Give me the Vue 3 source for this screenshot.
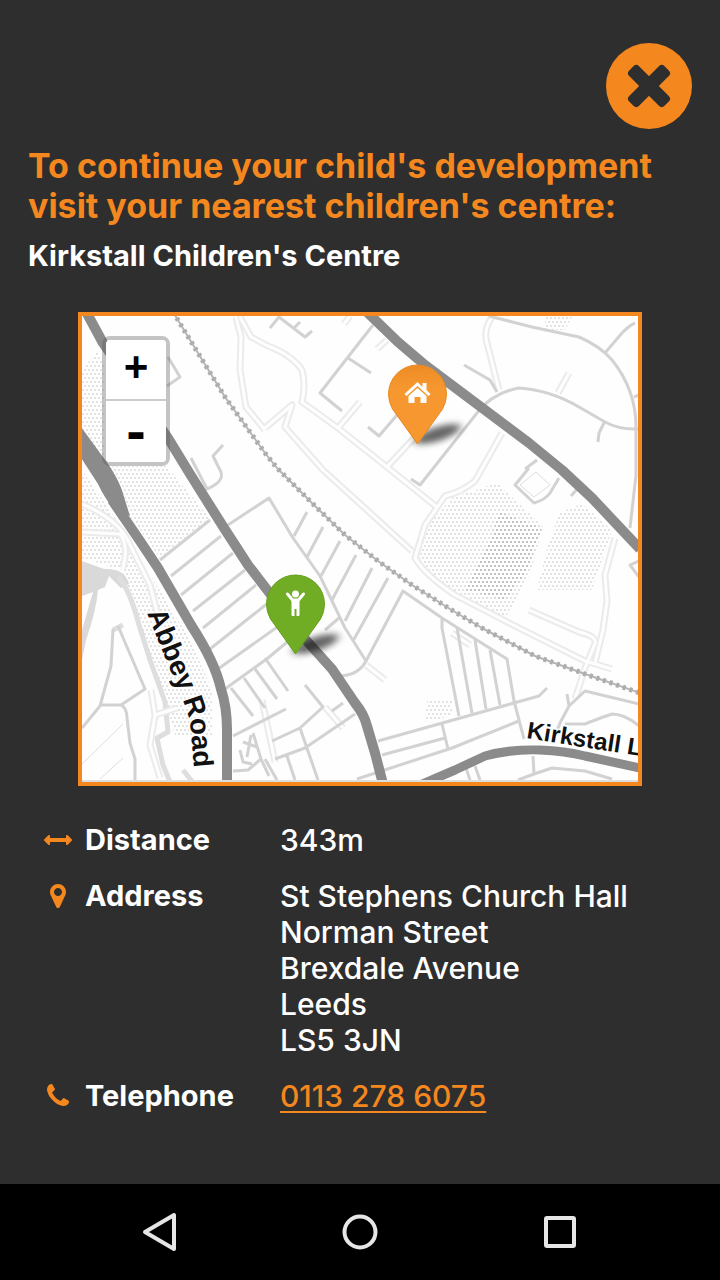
<script setup>
const title = "To continue your child's development visit your nearest children's centre:"
const centre = "Kirkstall Children's Centre"
const address = ['St Stephens Church Hall', 'Norman Street', 'Brexdale Avenue', 'Leeds', 'LS5 3JN']

const lanes = [
  'M236 317L241 337 240 370 246 407 265 430',
  'M240 317L251 337 268 346Q292 355 302 370Q306 385 302 402L338 428 387 467 438 508',
  'M265 428L292 405 285 427 323 470 412 551',
  'M360 402L338 428M387 467L415 437M350 316L344 324M387 340L377 349',
  'M492 317Q483 330 487 343L499 390M569 373L558 393',
  'M502 433L475 481Q462 492 445 496L425 525 415 558Q425 575 455 595L519 628 585 661 612 669',
  'M615 538L605 575 607 601 603 630 595 663M529 610L579 632Q600 637 594 646L585 668 575 699',
  'M82 504Q120 520 130 545L150 585 157 612M82 532L120 534Q129 545 123 568',
  'M452 633L470 645M325 707L343 728M366 665L385 680M262 700L275 762',
  'M151 690L155 715 150 745 160 778M155 715L177 708'
]
const streets = [
  'M168 357L180 377 167 386M223 445L213 456 221 472Q224 482 207 489L191 458',
  'M270 328L279 317 305 337 312 331M293 329L300 322',
  'M373 325L320 393 342 411M348 358L371 373M368 427L379 436 397 415',
  'M411 479L420 485 477 413Q492 393 519 388Q550 390 579 407L605 422Q620 430 638 429M604 423L599 433 598 442',
  'M464 365L490 380 497 392M537 460L525 469',
  'M489 316L532 327 579 337Q600 346 612 360Q636 390 636 427L636 475 630 528M605 353L622 333Q630 325 635 323M634 397L639 395',
  'M529 468L515 485 534 503Q545 500 550 493L559 478M571 496L578 488M639 561L630 565 639 577',
  'M160 560L210 520M171 576L221 536M181 595L233 553M193 611L245 570M203 628L256 585M210 649L268 603M218 669L290 618M225 689L268 658 292 638',
  'M231 688L253 716M244 678L265 708M255 669L277 699M265 658L288 691M233 736L286 709',
  'M228 525L269 498 293 538 320 576 345 628 366 661Q358 676 338 676',
  'M307 512L294 536M323 527L307 557M340 541L321 576M356 555L332 600M372 568L345 621M388 578L353 641M325 630L339 618',
  'M366 661L403 591 442 618 507 659 514 701 524 739M442 618V628L459 716M457 628L472 713M475 640L486 709M490 650L500 705',
  'M378 741L539 696 547 688M382 755L445 738M357 779L452 748 519 721M442 724L448 749',
  'M567 694L569 706 585 691 639 704M569 706L560 723 552 744M565 724H585Q600 718 612 714 625 714 639 726',
  'M533 756L534 774 552 768 585 771 612 779M534 774L518 780M466 768L470 780M475 766L480 780',
  'M305 685L323 707 300 728 272 741M300 728L318 780M355 714L305 748 275 759M287 756L295 780M332 711L343 703M265 759L277 780',
  'M233 771L248 770 261 759 269 776M261 759L253 733M243 742L257 747M240 750L243 762 252 764M251 735L247 757',
  'M113 629L111 666 100 706 82 728M118 626L145 689 121 705H100M121 705Q127 708 127 718L130 743 135 759V780'
]
const paths = [
  'M520 485L536 472 550 485 534 497Z',
  'M82 764L123 724M100 779L123 758'
]
const mainRoads = [
  'M84 308L103 343 168 438 190 474 224 528 248 565 268 591 305 639 332 669 355 703Q364 714 367 726L375 753 383 784',
  'M363 308L370 315 398 342 425 365 485 410 529 443 562 470 592 498 640 549',
  'M112 500L138 538 158 568 191 625Q215 662 221 689 227 707 227 730V784'
]
const railway = 'M173 312L198 353 225 397 265 453 277 468 315 506 345 535 378 561 412 585 450 609 482 628 535 656 585 674 640 693'
const dots = [
  'M82 370L98 350 104 362V466H166L210 518 160 558 118 500 82 438Z',
  'M82 470L120 525 190 640 212 690V735H175L160 690 130 600 122 570 82 558Z',
  'M545 317H572L565 330H545Z',
  'M452 498L497 483 543 526 530 575 505 618 455 592 418 562 428 525Z',
  'M560 512L582 504 612 530 592 590H537L548 545Z',
  'M427 701H452V716L425 722Z'
]
const pinShape = 'M0 50L-25 15Q-29 8-29 0A29 29 0 0 1 29 0Q29 8 25 15Z'
</script>

<template>
  <div class="screen">
    <main class="content">
      <button class="close" type="button" aria-label="Close">
        <svg viewBox="0 0 86 86">
          <circle cx="43" cy="43" r="43" />
          <g transform="translate(43 43) rotate(45)">
            <rect x="-25" y="-7" width="50" height="14" rx="4" />
            <rect x="-7" y="-25" width="14" height="50" rx="4" />
          </g>
        </svg>
      </button>
      <h1>{{ title }}</h1>
      <h2>{{ centre }}</h2>

      <section class="map" aria-label="Map">
        <svg class="tiles" viewBox="82 316 556 466">
          <defs>
            <pattern id="dots" width="4" height="8" patternUnits="userSpaceOnUse">
              <circle cx="1" cy="2" r="0.9" />
              <circle cx="3" cy="6" r="0.9" />
            </pattern>
            <pattern id="darkDots" width="4" height="8" patternUnits="userSpaceOnUse">
              <circle cx="1" cy="2" r="0.9" />
              <circle cx="3" cy="6" r="0.9" />
            </pattern>
            <linearGradient id="orangePin" x2="0" y2="1">
              <stop offset="0" stop-color="#ee8c24" />
              <stop offset="0.3" stop-color="#f69730" />
            </linearGradient>
            <filter id="soft" x="-50%" y="-100%" width="200%" height="300%">
              <feGaussianBlur stdDeviation="4 3" />
            </filter>
            <path id="abbey" d="M147 613L168 665Q184 700 190 722L196 790" />
            <path id="kirkstall" d="M526 738L575 746 660 759" />
          </defs>
          <rect class="land" x="82" y="316" width="556" height="466" />
          <path v-for="d in dots" :key="d" :d="d" fill="url(#dots)" />
          <path d="M500 512L542 528 526 573 505 600 465 590 488 545Z" fill="url(#darkDots)" />
          <path class="water" d="M82 561L104 569Q125 568 129 584L121 588 109 576 105 587 98 590Q96 612 86 640L82 660V630L93 592 82 596Z" />
          <path class="bank" d="M118 576Q130 590 139 625L150 660 165 702 168 732 157 738 163 765 170 782M183 770L195 785M113 630L123 625" />
          <path v-for="d in lanes" :key="d" class="lane-edge" :d="d" />
          <path v-for="d in lanes" :key="d" class="lane" :d="d" />
          <path v-for="d in paths" :key="d" class="footpath" :d="d" />
          <path v-for="d in streets" :key="d" class="street" :d="d" />
          <path class="rail" :d="railway" />
          <path class="ties" :d="railway" />
          <path v-for="d in mainRoads" :key="d" class="road" :d="d" />
          <path class="junction" d="M76 420L100 453Q119 477 124 497L130 516 114 510Q104 497 98 484L76 450Z" />
          <path class="lane-road" d="M418 786L455 770 485 756Q510 749 540 750 565 751 585 756L640 768" />
          <path class="edge" d="M82 781H638" />
          <text class="label abbey"><textPath href="#abbey">Abbey Road</textPath></text>
          <text class="label kirkstall"><textPath href="#kirkstall">Kirkstall L</textPath></text>

          <g transform="translate(417.5 394)">
            <ellipse class="shadow" cx="20" cy="40" rx="24" ry="7" transform="rotate(-18 20 40)" />
            <path class="pin home" :d="pinShape" />
            <path class="glyph" d="M0-12L5-7V-11H9V-4L13 0 11 2 0-8-11 2-13 0ZM0-6L9 2V9H3V3H-3V9H-9V2Z" />
          </g>
          <g transform="translate(295.5 604)">
            <ellipse class="shadow" cx="20" cy="40" rx="24" ry="7" transform="rotate(-18 20 40)" />
            <path class="pin child" :d="pinShape" />
            <circle class="glyph" cy="-10" r="3.5" />
            <path class="arms" d="M-8-10L-3-4H3L8-10" />
            <path class="glyph" d="M-4-5H4V11Q4 12 3 12H1V5H-1V12H-3Q-4 12-4 11Z" />
          </g>
        </svg>
        <div class="zoom">
          <button class="zoom-in" type="button" aria-label="Zoom in">+</button>
          <button class="zoom-out" type="button" aria-label="Zoom out">-</button>
        </div>
      </section>

      <dl>
        <dt>
          <span class="icon"><svg width="28" height="28" viewBox="0 0 1792 1792"><path d="M1792 896q0 26-19 45l-256 256q-19 19-45 19t-45-19-19-45v-128h-1024v128q0 26-19 45t-45 19-45-19l-256-256q-19-19-19-45t19-45l256-256q19-19 45-19t45 19 19 45v128h1024v-128q0-26 19-45t45-19 45 19l256 256q19 19 19 45z" /></svg></span>
          Distance
        </dt>
        <dd>343m</dd>
        <dt>
          <span class="icon"><svg width="16" height="28" viewBox="0 0 1024 1792"><path d="M768 640q0-106-75-181t-181-75-181 75-75 181 75 181 181 75 181-75 75-181zm256 0q0 109-33 179l-364 774q-16 33-47.5 52t-67.5 19-67.5-19-46.5-52l-365-774q-33-70-33-179 0-212 150-362t362-150 362 150 150 362z" /></svg></span>
          Address
        </dt>
        <dd><div v-for="line in address" :key="line">{{ line }}</div></dd>
        <dt>
          <span class="icon"><svg width="22" height="28" viewBox="0 0 1408 1792"><path d="M1408 1240q0 27-10 70.5t-21 68.5q-21 50-122 106-94 51-186 51-27 0-52.5-3.5t-57.5-12.5-47.5-14.5-55.5-20.5-49-18q-98-35-175-83-128-79-264.5-215.5t-215.5-264.5q-48-77-83-175-3-9-18-49t-20.5-55.5-14.5-47.5-12.5-57.5-3.5-52.5q0-92 51-186 56-101 106-122 25-11 68.5-21t70.5-10q14 0 21 3 18 6 53 76 11 19 30 54t35 63.5 31 53.5q3 4 17.5 25t21.5 35.5 7 28.5q0 20-28.5 50t-62 55-62 53-28.5 46q0 9 5 22.5t8.5 20.5 14 24 11.5 19q76 137 174 235t235 174q2 1 19 11.5t24 14 20.5 8.5 22.5 5q18 0 46-28.5t53-62 55-62 50-28.5q14 0 28.5 7t35.5 21.5 25 17.5q25 15 53.5 31t63.5 35 54 30q70 35 76 53 3 7 3 21z" /></svg></span>
          Telephone
        </dt>
        <dd><a href="tel:01132786075">0113 278 6075</a></dd>
      </dl>
    </main>

    <nav>
      <button type="button" aria-label="Back">
        <svg width="40" height="40" viewBox="0 0 40 40"><path d="M34 3V37L5 20Z" /></svg>
      </button>
      <button type="button" aria-label="Home">
        <svg width="40" height="40" viewBox="0 0 40 40"><circle cx="20" cy="20" r="15.5" /></svg>
      </button>
      <button type="button" aria-label="Recent apps">
        <svg width="40" height="40" viewBox="0 0 40 40"><rect x="6" y="6" width="28" height="28" rx="1" /></svg>
      </button>
    </nav>
  </div>
</template>

<style>
body {
  margin: 0;
  background: #2e2e2e;
}
</style>

<style scoped>
.screen {
  display: flex;
  flex-direction: column;
  min-height: 100vh;
  background: #2e2e2e;
  color: #fff;
  font-family: Inter, "Open Sans", sans-serif;
}
.content {
  flex: 1;
  display: flex;
  flex-direction: column;
  padding: 43px 28px 32px;
}
button {
  margin: 0;
  padding: 0;
  border: 0;
  background: none;
  cursor: pointer;
}
.close {
  align-self: flex-end;
  width: 86px;
  height: 86px;
  border-radius: 50%;
}
.close svg {
  display: block;
  fill: #f5871f;
}
.close rect {
  fill: #2e2e2e;
}
h1 {
  margin: 17px 0 0;
  color: #f5871f;
  font-size: 34px;
  line-height: 40px;
  font-weight: 700;
}
h2 {
  margin: 12px 0 0;
  font-size: 29px;
  line-height: 36px;
  font-weight: 700;
}
.map {
  position: relative;
  margin: 38px 50px 0;
  border: 4px solid #f5871f;
}
.tiles {
  display: block;
  width: 100%;
  height: auto;
}
.tiles path {
  stroke-linejoin: round;
}
.land { fill: #fefefe; }
#dots circle { fill: #d6d6d6; }
#darkDots circle { fill: #b4b4b4; }
.water { fill: #d9d9d9; }
.bank,
.lane-edge,
.lane,
.footpath,
.street,
.rail,
.ties,
.road,
.lane-road,
.edge { fill: none; }
.bank { stroke: #dedede; stroke-width: 5; }
.lane-edge { stroke: #ebebeb; stroke-width: 7; }
.lane { stroke: #fefefe; stroke-width: 3; }
.footpath { stroke: #dedede; stroke-width: 1; }
.street { stroke: #d2d2d2; stroke-width: 3; }
.rail { stroke: #b5b5b5; stroke-width: 2; }
.ties { stroke: #adadad; stroke-width: 5; stroke-dasharray: 3 4; }
.road { stroke: #8b8b8b; stroke-width: 10; }
.junction { fill: #8b8b8b; }
.lane-road { stroke: #8b8b8b; stroke-width: 9; }
.edge { stroke: #dedede; stroke-width: 2; }
.label {
  font-family: "Liberation Sans", Arial, sans-serif;
  font-weight: 700;
  fill: #111;
  stroke: #fff;
  stroke-width: 3px;
  paint-order: stroke;
}
.abbey { font-size: 28px; }
.kirkstall { font-size: 24px; }
.shadow { fill: #000; opacity: 0.6; filter: url(#soft); }
.home { fill: url(#orangePin); stroke: #e68a25; }
.child { fill: #70ad24; stroke: #64a01d; }
.glyph { fill: #fff; }
.arms { fill: none; stroke: #fff; stroke-width: 3; stroke-linecap: round; }
.zoom {
  position: absolute;
  top: 20px;
  left: 20px;
  width: 60px;
  border: 4px solid rgba(90, 90, 90, 0.35);
  border-radius: 8px;
}
.zoom button {
  display: block;
  width: 60px;
  height: 61px;
  background: #fff;
  color: #000;
}
.zoom-in {
  border-bottom: 2px solid #ccc;
  border-radius: 4px 4px 0 0;
  font: 700 42px/52px "Liberation Mono", monospace;
}
.zoom-out {
  border-radius: 0 0 4px 4px;
  font: 700 48px/52px "DejaVu Sans Mono", monospace;
}
dl {
  display: grid;
  grid-template-columns: 236px 1fr;
  row-gap: 20px;
  margin: 36px 0 0 16px;
  font-size: 29px;
  line-height: 36px;
}
dt {
  display: flex;
  gap: 13px;
  align-items: center;
  align-self: start;
  font-weight: 700;
}
.icon {
  display: flex;
  justify-content: center;
  width: 28px;
}
.icon svg {
  fill: #f5871f;
}
dd {
  margin: 0;
  font-size: 30px;
  font-weight: 500;
}
a {
  color: #f5871f;
  text-decoration-thickness: 2px;
  text-underline-offset: 4px;
}
nav {
  display: flex;
  height: 96px;
  padding: 0 60px;
  background: #000;
}
nav button {
  flex: 1;
  display: flex;
  align-items: center;
  justify-content: center;
}
nav svg {
  fill: none;
  stroke: #e6e6e6;
  stroke-width: 4;
  stroke-linejoin: round;
}
</style>
